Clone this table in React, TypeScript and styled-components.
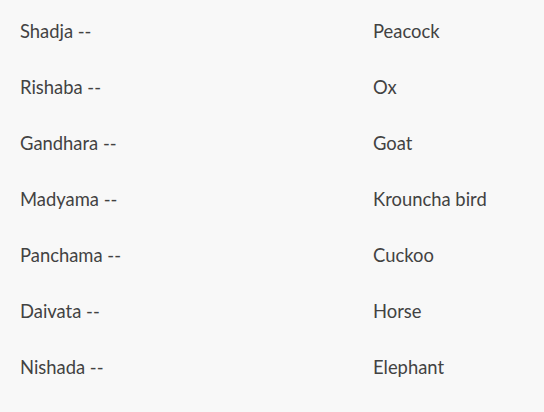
import React from "react";
import styled, { createGlobalStyle } from "styled-components";

const Global = createGlobalStyle`
  html, body { margin: 0; padding: 0; background: #f8f8f8; }
  body { font-family: Lato, "Open Sans", sans-serif; }
`;

const Table = styled.div`
  display: grid;
  grid-template-columns: 353px 1fr;
  padding: 18px 0 0 20px;
  color: #424242;
  font-size: 18.4px;
`;

const Cell = styled.div`
  height: 56px;
  line-height: 26px;
`;

const rows: [string, string][] = [
  ["Shadja --", "Peacock"],
  ["Rishaba --", "Ox"],
  ["Gandhara --", "Goat"],
  ["Madyama --", "Krouncha bird"],
  ["Panchama --", "Cuckoo"],
  ["Daivata --", "Horse"],
  ["Nishada --", "Elephant"],
];

export default function App() {
  return (
    <>
      <Global />
      <Table>
        {rows.map(([a, b]) => (
          <React.Fragment key={a}>
            <Cell>{a}</Cell>
            <Cell>{b}</Cell>
          </React.Fragment>
        ))}
      </Table>
    </>
  );
}
